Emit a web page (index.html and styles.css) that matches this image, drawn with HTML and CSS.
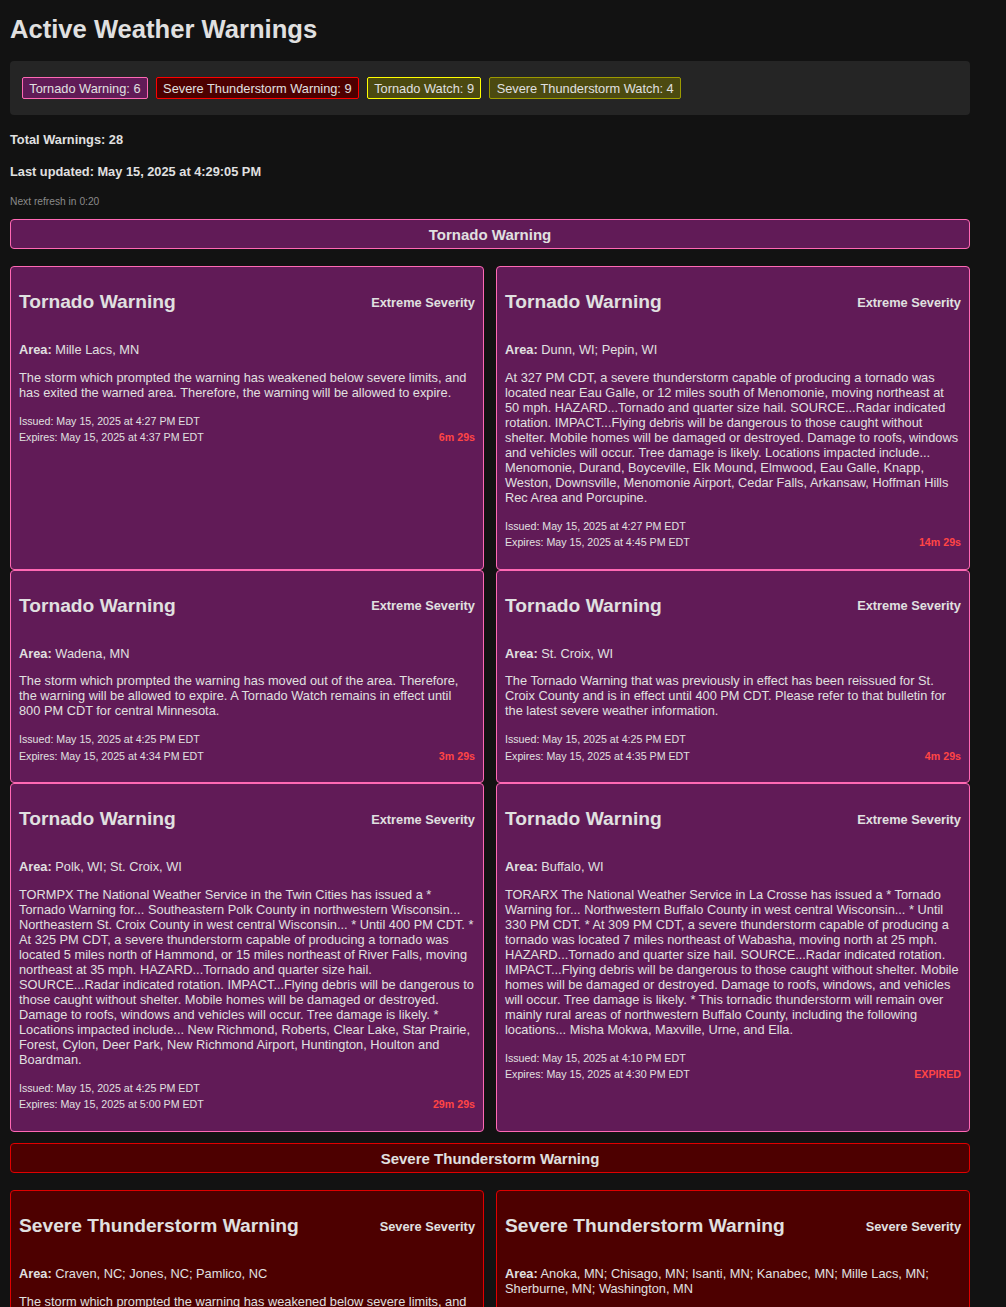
FILE: index.html
```html
<!DOCTYPE html>
<html lang="en">
<head>
<meta charset="utf-8">
<title>Active Weather Warnings</title>
<link rel="stylesheet" href="styles.css">
</head>
<body>
<div class="page">
  <h1 class="page-title">Active Weather Warnings</h1>

  <div class="stats">
    <span class="badge badge-tornado">Tornado Warning: 6</span>
    <span class="badge badge-severe">Severe Thunderstorm Warning: 9</span>
    <span class="badge badge-twatch">Tornado Watch: 9</span>
    <span class="badge badge-swatch">Severe Thunderstorm Watch: 4</span>
  </div>

  <p class="summary">Total Warnings: 28</p>
  <p class="summary updated">Last updated: May 15, 2025 at 4:29:05 PM</p>
  <p class="refresh">Next refresh in 0:20</p>

  <section class="section">
    <h3 class="section-bar bar-tornado">Tornado Warning</h3>
    <div class="grid">
      <div class="card card-tornado">
        <div class="card-header"><h2 class="card-title">Tornado Warning</h2><span class="severity">Extreme Severity</span></div>
        <p class="area"><strong>Area:</strong> Mille Lacs, MN</p>
        <p class="desc">The storm which prompted the warning has weakened below severe limits, and has exited the warned area. Therefore, the warning will be allowed to expire.</p>
        <div class="card-footer">
          <div class="issued">Issued: May 15, 2025 at 4:27 PM EDT</div>
          <div class="expires-row"><span>Expires: May 15, 2025 at 4:37 PM EDT</span><span class="countdown">6m 29s</span></div>
        </div>
      </div>
      <div class="card card-tornado">
        <div class="card-header"><h2 class="card-title">Tornado Warning</h2><span class="severity">Extreme Severity</span></div>
        <p class="area"><strong>Area:</strong> Dunn, WI; Pepin, WI</p>
        <p class="desc">At 327 PM CDT, a severe thunderstorm capable of producing a tornado was located near Eau Galle, or 12 miles south of Menomonie, moving northeast at 50 mph. HAZARD...Tornado and quarter size hail. SOURCE...Radar indicated rotation. IMPACT...Flying debris will be dangerous to those caught without shelter. Mobile homes will be damaged or destroyed. Damage to roofs, windows and vehicles will occur. Tree damage is likely. Locations impacted include... Menomonie, Durand, Boyceville, Elk Mound, Elmwood, Eau Galle, Knapp, Weston, Downsville, Menomonie Airport, Cedar Falls, Arkansaw, Hoffman Hills Rec Area and Porcupine.</p>
        <div class="card-footer">
          <div class="issued">Issued: May 15, 2025 at 4:27 PM EDT</div>
          <div class="expires-row"><span>Expires: May 15, 2025 at 4:45 PM EDT</span><span class="countdown">14m 29s</span></div>
        </div>
      </div>
      <div class="card card-tornado">
        <div class="card-header"><h2 class="card-title">Tornado Warning</h2><span class="severity">Extreme Severity</span></div>
        <p class="area"><strong>Area:</strong> Wadena, MN</p>
        <p class="desc">The storm which prompted the warning has moved out of the area. Therefore, the warning will be allowed to expire. A Tornado Watch remains in effect until 800 PM CDT for central Minnesota.</p>
        <div class="card-footer">
          <div class="issued">Issued: May 15, 2025 at 4:25 PM EDT</div>
          <div class="expires-row"><span>Expires: May 15, 2025 at 4:34 PM EDT</span><span class="countdown">3m 29s</span></div>
        </div>
      </div>
      <div class="card card-tornado">
        <div class="card-header"><h2 class="card-title">Tornado Warning</h2><span class="severity">Extreme Severity</span></div>
        <p class="area"><strong>Area:</strong> St. Croix, WI</p>
        <p class="desc">The Tornado Warning that was previously in effect has been reissued for St. Croix County and is in effect until 400 PM CDT. Please refer to that bulletin for the latest severe weather information.</p>
        <div class="card-footer">
          <div class="issued">Issued: May 15, 2025 at 4:25 PM EDT</div>
          <div class="expires-row"><span>Expires: May 15, 2025 at 4:35 PM EDT</span><span class="countdown">4m 29s</span></div>
        </div>
      </div>
      <div class="card card-tornado">
        <div class="card-header"><h2 class="card-title">Tornado Warning</h2><span class="severity">Extreme Severity</span></div>
        <p class="area"><strong>Area:</strong> Polk, WI; St. Croix, WI</p>
        <p class="desc">TORMPX The National Weather Service in the Twin Cities has issued a * Tornado Warning for... Southeastern Polk County in northwestern Wisconsin... Northeastern St. Croix County in west central Wisconsin... * Until 400 PM CDT. * At 325 PM CDT, a severe thunderstorm capable of producing a tornado was located 5 miles north of Hammond, or 15 miles northeast of River Falls, moving northeast at 35 mph. HAZARD...Tornado and quarter size hail. SOURCE...Radar indicated rotation. IMPACT...Flying debris will be dangerous to those caught without shelter. Mobile homes will be damaged or destroyed. Damage to roofs, windows and vehicles will occur. Tree damage is likely. * Locations impacted include... New Richmond, Roberts, Clear Lake, Star Prairie, Forest, Cylon, Deer Park, New Richmond Airport, Huntington, Houlton and Boardman.</p>
        <div class="card-footer">
          <div class="issued">Issued: May 15, 2025 at 4:25 PM EDT</div>
          <div class="expires-row"><span>Expires: May 15, 2025 at 5:00 PM EDT</span><span class="countdown">29m 29s</span></div>
        </div>
      </div>
      <div class="card card-tornado">
        <div class="card-header"><h2 class="card-title">Tornado Warning</h2><span class="severity">Extreme Severity</span></div>
        <p class="area"><strong>Area:</strong> Buffalo, WI</p>
        <p class="desc">TORARX The National Weather Service in La Crosse has issued a * Tornado Warning for... Northwestern Buffalo County in west central Wisconsin... * Until 330 PM CDT. * At 309 PM CDT, a severe thunderstorm capable of producing a tornado was located 7 miles northeast of Wabasha, moving north at 25 mph. HAZARD...Tornado and quarter size hail. SOURCE...Radar indicated rotation. IMPACT...Flying debris will be dangerous to those caught without shelter. Mobile homes will be damaged or destroyed. Damage to roofs, windows, and vehicles will occur. Tree damage is likely. * This tornadic thunderstorm will remain over mainly rural areas of northwestern Buffalo County, including the following locations... Misha Mokwa, Maxville, Urne, and Ella.</p>
        <div class="card-footer">
          <div class="issued">Issued: May 15, 2025 at 4:10 PM EDT</div>
          <div class="expires-row"><span>Expires: May 15, 2025 at 4:30 PM EDT</span><span class="countdown">EXPIRED</span></div>
        </div>
      </div>
    </div>
  </section>

  <section class="section">
    <h3 class="section-bar bar-severe">Severe Thunderstorm Warning</h3>
    <div class="grid">
      <div class="card card-severe">
        <div class="card-header"><h2 class="card-title">Severe Thunderstorm Warning</h2><span class="severity">Severe Severity</span></div>
        <p class="area"><strong>Area:</strong> Craven, NC; Jones, NC; Pamlico, NC</p>
        <p class="desc">The storm which prompted the warning has weakened below severe limits, and has exited the warned area. Therefore, the warning will be allowed to expire.</p>
        <div class="card-footer">
          <div class="issued">Issued: May 15, 2025 at 4:20 PM EDT</div>
          <div class="expires-row"><span>Expires: May 15, 2025 at 4:45 PM EDT</span><span class="countdown">15m 55s</span></div>
        </div>
      </div>
      <div class="card card-severe">
        <div class="card-header"><h2 class="card-title">Severe Thunderstorm Warning</h2><span class="severity">Severe Severity</span></div>
        <p class="area"><strong>Area:</strong> Anoka, MN; Chisago, MN; Isanti, MN; Kanabec, MN; Mille Lacs, MN; Sherburne, MN; Washington, MN</p>
        <p class="desc">At 325 PM CDT, severe thunderstorms were located along a line extending from near Onamia to near Forest Lake, moving northeast at 40 mph. HAZARD...60 mph wind gusts and quarter size hail. SOURCE...Radar indicated.</p>
        <div class="card-footer">
          <div class="issued">Issued: May 15, 2025 at 4:25 PM EDT</div>
          <div class="expires-row"><span>Expires: May 15, 2025 at 5:15 PM EDT</span><span class="countdown">44m 29s</span></div>
        </div>
      </div>
    </div>
  </section>
</div>
</body>
</html>
```

FILE: styles.css
```css
* {
  box-sizing: border-box;
}

body {
  margin: 0;
  background: #121212;
  color: #e0e0e0;
  font-family: "Liberation Sans", Arial, sans-serif;
  font-size: 12.8px;
}

.page {
  max-width: 980px;
  padding: 15px 10px 20px;
}

.page-title {
  margin: 0 0 17px;
  font-size: 25.6px;
  line-height: 29px;
  font-weight: bold;
}

.stats {
  display: flex;
  flex-wrap: wrap;
  gap: 8px;
  padding: 16px 12px;
  background: #252525;
  border-radius: 4px;
}

.badge {
  font-size: 12.8px;
  line-height: 15px;
  padding: 2.5px 6.3px;
  border: 1px solid;
  border-radius: 2px;
}

.badge-tornado {
  background: #611b57;
  border-color: #ff69b4;
}

.badge-severe {
  background: #4d0000;
  border-color: #ff0000;
}

.badge-twatch {
  background: #4c4a10;
  border-color: #ffff00;
}

.badge-swatch {
  background: #4c4a10;
  border-color: #9c9a00;
}

.summary {
  margin: 17px 0 0;
  font-weight: bold;
  line-height: 15px;
}

.refresh {
  margin: 16px 0 0;
  font-size: 10.24px;
  line-height: 13px;
  color: #8a8a8a;
}

.section {
  margin-top: 11px;
}

.section-bar {
  margin: 0 0 17px;
  padding: 5.6px 0;
  font-size: 15px;
  line-height: 17px;
  font-weight: bold;
  text-align: center;
  border: 1px solid;
  border-radius: 4px;
}

.bar-tornado {
  background: #611b57;
  border-color: #ff69b4;
}

.bar-severe {
  background: #4d0000;
  border-color: #e00000;
}

.grid {
  display: grid;
  grid-template-columns: 1fr 1fr;
  column-gap: 12px;
  row-gap: 0;
}

.card {
  border: 1px solid;
  border-radius: 4px;
  padding: 8px 8px 9px;
}

.card-tornado {
  background: #611b57;
  border-color: #ff69b4;
}

.card-severe {
  background: #4d0000;
  border-color: #e00000;
}

.card-header {
  display: flex;
  justify-content: space-between;
  align-items: center;
  padding: 16px 0;
}

.card-title {
  margin: 0;
  font-size: 19.2px;
  line-height: 22px;
  font-weight: bold;
}

.severity {
  font-weight: bold;
  line-height: 15px;
}

.area,
.desc {
  margin: 12.8px 0 0;
  line-height: 15px;
}

.card-footer {
  margin: 15px 0 11px;
  font-size: 10.67px;
  line-height: 12.5px;
}

.issued {
  margin-bottom: 4px;
}

.expires-row {
  display: flex;
  justify-content: space-between;
}

.countdown {
  color: #ff4545;
  font-weight: bold;
}
```
